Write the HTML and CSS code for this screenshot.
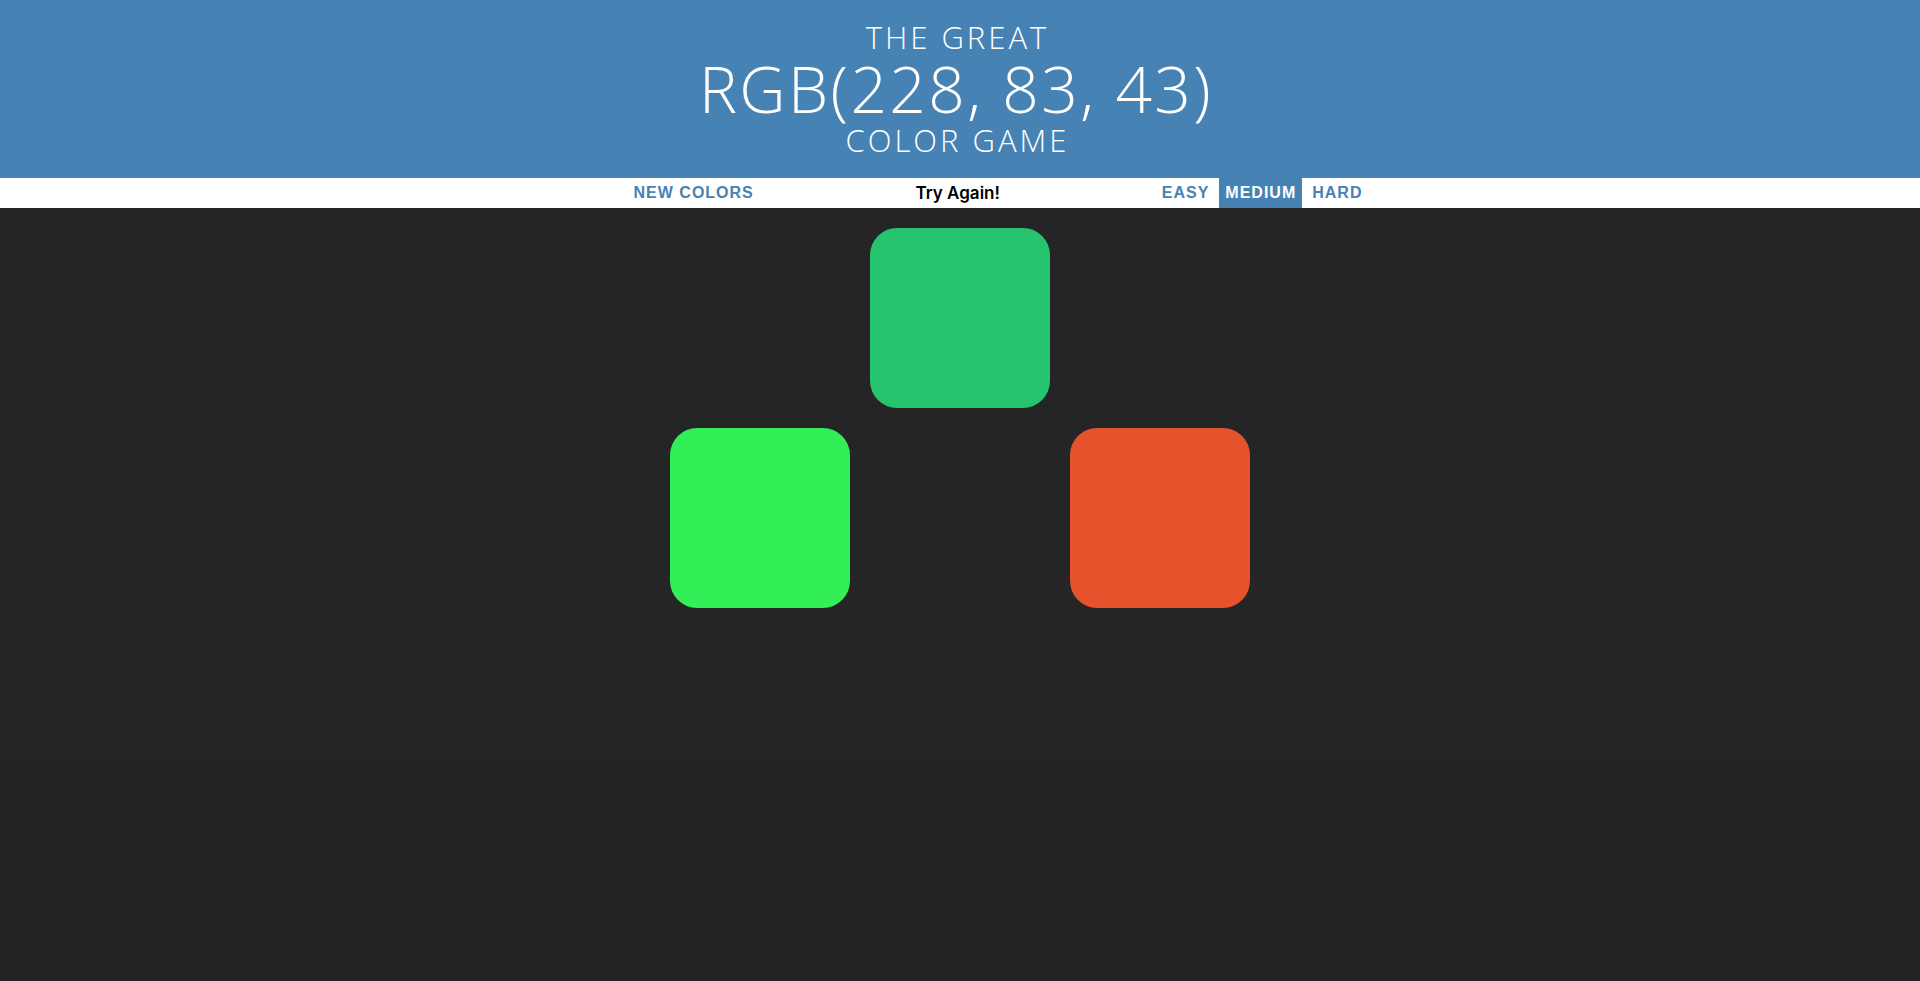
FILE: index.html
```html
<!DOCTYPE html>
<html lang="en">
<head>
<meta charset="utf-8">
<title>Color Game</title>
<link rel="stylesheet" href="styles.css">
</head>
<body>
<div class="page">
  <h1 class="title">
    <span class="title-line">The Great</span>
    <span class="title-rgb">RGB(228, 83, 43)</span>
    <span class="title-line">Color Game</span>
  </h1>
  <div class="stripe">
    <button class="btn">New Colors</button>
    <span class="message">Try Again!</span>
    <div class="modes">
      <button class="btn">Easy</button>
      <button class="btn selected">Medium</button>
      <button class="btn">Hard</button>
    </div>
  </div>
  <div class="board">
    <div class="square hidden"></div>
    <div class="square" style="background:#26c46f"></div>
    <div class="square hidden"></div>
    <div class="square" style="background:#33ef57"></div>
    <div class="square hidden"></div>
    <div class="square" style="background:#e4532b"></div>
  </div>
</div>
</body>
</html>
```

FILE: styles.css
```css
html {
  background: #232323;
}
body {
  margin: 0;
  font-family: "Open Sans", "Liberation Sans", sans-serif;
}
.page {
  min-height: 760px;
  background: #252525;
}
.title {
  margin: 0;
  padding: 20px 8px 20px 0;
  background: #4682b4;
  color: #ffffff;
  text-align: center;
  text-transform: uppercase;
  font-weight: 350;
  display: flex;
  flex-direction: column;
  align-items: center;
  height: 138px;
}
.title-line {
  display: block;
  font-size: 31px;
  line-height: 35px;
  letter-spacing: 3px;
  padding-left: 3px;
}
.title-rgb {
  display: block;
  font-size: 64px;
  line-height: 68px;
  letter-spacing: 2.4px;
  padding-left: 0;
}
.stripe {
  height: 30px;
  background: #ffffff;
  display: flex;
  justify-content: center;
  align-items: stretch;
  padding-left: 76px;
}
.btn {
  border: none;
  background: none;
  margin: 0;
  padding: 0 6px;
  font-family: "Liberation Sans", Arial, sans-serif;
  font-weight: 700;
  font-size: 16px;
  letter-spacing: 1px;
  text-transform: uppercase;
  color: #4682b4;
  height: 30px;
  cursor: pointer;
}
.btn.selected {
  background: #4682b4;
  color: #ffffff;
}
.message {
  width: 384px;
  margin: 0 4px 0 6px;
  display: flex;
  align-items: center;
  justify-content: center;
  font-family: "Inter", "Noto Sans", sans-serif;
  font-weight: 600;
  font-size: 17px;
  color: #000000;
}
.modes {
  display: flex;
  gap: 4px;
  margin-left: 2px;
}
.board {
  width: 580px;
  margin: 0 auto;
  padding-top: 20px;
  display: grid;
  grid-template-columns: repeat(3, 180px);
  gap: 20px;
}
.square {
  width: 180px;
  height: 180px;
  border-radius: 27px;
}
.square.hidden {
  background: #252525;
  box-shadow: 0 0 1px rgba(0, 0, 0, 0.28);
}
```
